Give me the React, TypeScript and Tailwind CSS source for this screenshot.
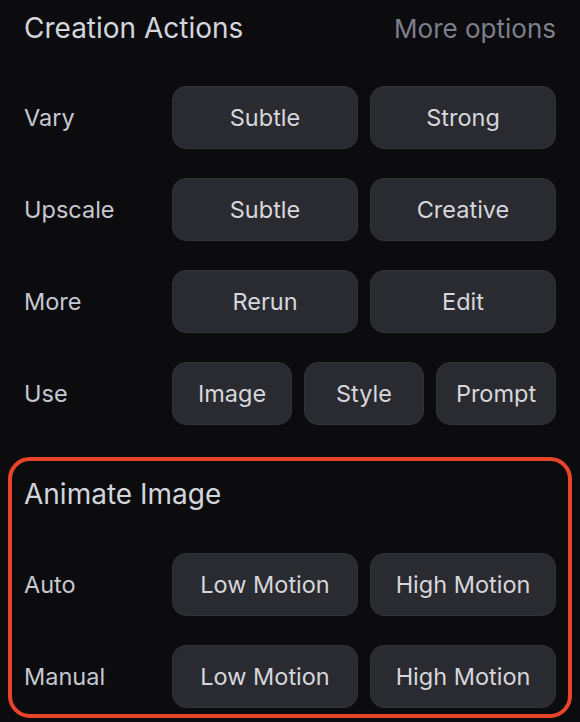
import React from "react";

const font = { fontFamily: "Inter, Roboto, 'Noto Sans', sans-serif" };

function Btn({ children }: { children: React.ReactNode }) {
  return (
    <div className="flex-1 h-[63px] flex items-center justify-center rounded-[14px] bg-[#2a2b30] border border-[#323338] text-[#d6d7dc] text-[23.5px]">
      {children}
    </div>
  );
}

function Row({ label, items }: { label: string; items: string[] }) {
  return (
    <div className="flex items-center">
      <div className="w-[148px] text-[23.5px] text-[#c6c8d1]">{label}</div>
      <div className="flex-1 flex gap-[12px]">
        {items.map((t) => (
          <Btn key={t}>{t}</Btn>
        ))}
      </div>
    </div>
  );
}

export default function App() {
  return (
    <div style={font} className="w-[580px] h-[722px] bg-[#0c0c0e] px-[8px] overflow-hidden">
      <div className="border-4 border-transparent px-[12px]">
        <div className="h-[48px] flex items-center justify-between">
          <div className="text-[28px] text-[#d3d5dc]">Creation Actions</div>
          <div className="text-[26px] text-[#7c7f8c]">More options</div>
        </div>
        <div className="pt-[34px] flex flex-col gap-[29px]">
          <Row label="Vary" items={["Subtle", "Strong"]} />
          <Row label="Upscale" items={["Subtle", "Creative"]} />
          <Row label="More" items={["Rerun", "Edit"]} />
          <Row label="Use" items={["Image", "Style", "Prompt"]} />
        </div>
      </div>
      <div className="mt-[28px] border-4 border-[#e8442b] rounded-[22px] px-[12px] pb-[6px]">
        <div className="h-[66px] flex items-center text-[28px] text-[#d3d5dc]">Animate Image</div>
        <div className="pt-[26px] flex flex-col gap-[29px]">
          <Row label="Auto" items={["Low Motion", "High Motion"]} />
          <Row label="Manual" items={["Low Motion", "High Motion"]} />
        </div>
      </div>
    </div>
  );
}
